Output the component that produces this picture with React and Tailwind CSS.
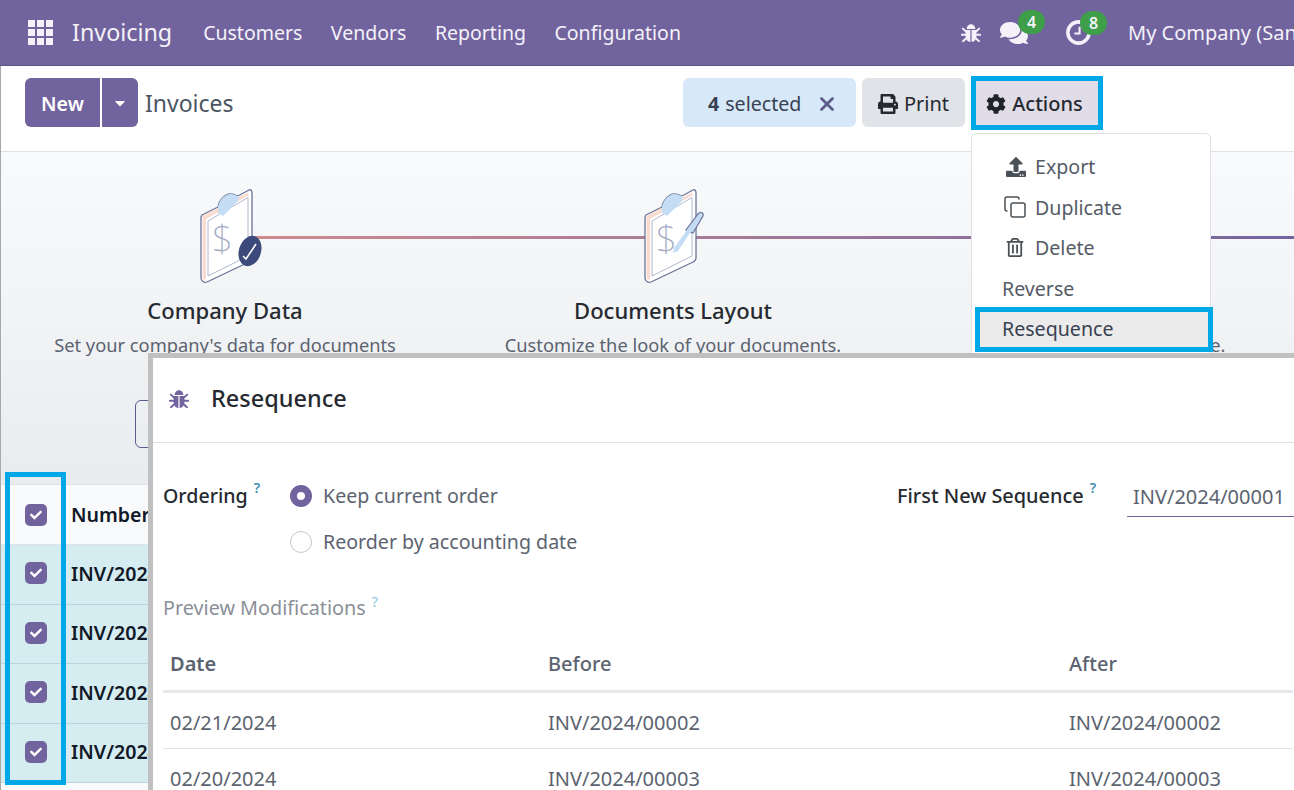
import { Copy, X } from "lucide-react";
import { FaCaretDown, FaCheck, FaCog, FaComments, FaPrint, FaRegTrashAlt, FaUpload } from "react-icons/fa";

const navLinks = ["Customers", "Vendors", "Reporting", "Configuration"];
const rowLabels = ["INV/2024/00002", "INV/2024/00003", "INV/2024/00004", "INV/2024/00005"];
const previewRows = [
  { date: "02/21/2024", before: "INV/2024/00002", after: "INV/2024/00002" },
  { date: "02/20/2024", before: "INV/2024/00003", after: "INV/2024/00003" },
];

const BugIcon = ({ className }) => (
  <svg viewBox="0 0 20 20" className={className} fill="currentColor">
    <path d="M5.6 6 C5.8 3 7.7 1.2 10 1.2 C12.3 1.2 14.2 3 14.4 6 Z" />
    <path d="M4.6 7 H9.4 V19 C6.6 18.8 4.6 16.4 4.6 13 Z" />
    <path d="M15.4 7 H10.6 V19 C13.4 18.8 15.4 16.4 15.4 13 Z" />
    <path
      d="M5 8.5 L1.8 5.6 M5 11.8 H0.8 M5.6 15 L2 18.2 M15 8.5 L18.2 5.6 M15 11.8 H19.2 M14.4 15 L18 18.2"
      fill="none"
      stroke="currentColor"
      strokeWidth="1.9"
      strokeLinecap="round"
    />
  </svg>
);

const ClockIcon = ({ className }) => (
  <svg viewBox="0 0 24 24" className={className} fill="none" stroke="currentColor">
    <circle cx="12" cy="12" r="10.2" strokeWidth="3.4" />
    <path d="M13 6.5 V13 H8" strokeWidth="2" />
  </svg>
);

const Clipboard = ({ shift = 0, children }) => (
  <svg viewBox="0 0 70 100" className="w-[70px] h-[100px] overflow-visible relative">
    <g transform={`translate(${shift} 0)`}>
      <path
        d="M12 29 L28 21 C29 14 36 7 41 8 C44 8 46 10 48 10 L59 4 C61 3 62 5 62 7 L62 72 C62 74 61 75 59 76 L17 96 C14 97 11 95 11 92 L11 31 Z"
        fill="#ffffff"
        stroke="#6b7499"
        strokeWidth="1.3"
        strokeLinejoin="round"
      />
      <path d="M12.5 30 L58 6.5 L59 9 L16 33 L16 93 L14 94 L12.5 92 Z" fill="#f8dccf" />
      <path d="M18 35 L58 11.5 L58 70 L18 90 Z" fill="#ffffff" stroke="#a9afc8" strokeWidth="0.9" />
      <path d="M28 21 C29 14 36 7 41 8 C44 8 46 10 49 10 L48 15 L33 30 L28 27 Z" fill="#c5dcf5" />
      <text x="22" y="66" fontSize="37" fontFamily="'Noto Sans', sans-serif" fontWeight="200" fill="#a3aac4">
        $
      </text>
      {children}
    </g>
  </svg>
);

const PurpleCheck = () => (
  <span className="w-[22px] h-[22px] rounded-[5px] bg-[#71639e] flex items-center justify-center">
    <FaCheck className="w-[12px] h-[12px] text-white" />
  </span>
);

const MenuItem = ({ icon, label, active }) => (
  <div
    className={
      active
        ? "h-[45px] -mt-[2px] w-[238px] ml-[3px] pl-[22px] flex items-center bg-[#ebebeb] border-[5px] border-[#00a8e8] text-[#374151]"
        : "h-[40.5px] pl-[30px] flex items-center text-[#555b66]"
    }
  >
    {icon && <span className="w-[33px] text-[#495057] flex">{icon}</span>}
    {label}
  </div>
);

const Help = () => <sup className="text-[#3f8fb0] text-[14px] font-semibold ml-[6px] -top-[8px] relative">?</sup>;

export default function App() {
  return (
    <div className="relative w-[1294px] h-[790px] overflow-hidden bg-white font-['Noto_Sans',sans-serif] text-[19.6px]">
      <nav className="h-[66px] bg-[#71639e] border-b border-[#5f5287] flex items-center text-[#f4f2f8]">
        <div className="ml-[28px] w-[25px] h-[25px] grid grid-cols-3 gap-[2px]">
          {[0, 1, 2, 3, 4, 5, 6, 7, 8].map((i) => (
            <span key={i} className="bg-[#f4f2f8]" />
          ))}
        </div>
        <span className="ml-[19px] text-[23.3px]">Invoicing</span>
        <div className="ml-[31px] flex gap-[28.5px] text-[19.5px] pt-[1px]">
          {navLinks.map((link) => (
            <span key={link}>{link}</span>
          ))}
        </div>
        <div className="ml-auto flex items-center text-[20px]">
          <BugIcon className="w-[20px] h-[20px]" />
          <span className="relative ml-[19px] w-[28px] flex">
            <FaComments className="w-[28px] h-[28px]" />
            <span className="absolute -top-[9px] left-[18px] w-[27px] h-[24px] rounded-full bg-[#3f9e49] text-[16px] font-semibold flex items-center justify-center">
              4
            </span>
          </span>
          <span className="relative ml-[38px] w-[25px] flex">
            <ClockIcon className="w-[25px] h-[25px]" />
            <span className="absolute -top-[9px] left-[14px] w-[27px] h-[24px] rounded-full bg-[#3f9e49] text-[16px] font-semibold flex items-center justify-center">
              8
            </span>
          </span>
          <span className="ml-[37px] w-[166px] whitespace-nowrap overflow-hidden">My Company (San Francisco)</span>
        </div>
      </nav>

      <div className="border-l border-[#a8a8a8]">
        <div className="h-[86px] border-b border-[#dee2e6] pl-[24px] flex items-start pt-[12px]">
          <div className="w-[658px] flex items-center">
            <span className="h-[49px] w-[75px] pt-[2px] bg-[#71639e] rounded-l-[6px] text-white font-semibold flex items-center justify-center">
              New
            </span>
            <span className="h-[49px] w-[36px] ml-[2px] bg-[#71639e] rounded-r-[6px] text-white flex items-center justify-center">
              <FaCaretDown className="w-[16px] h-[16px]" />
            </span>
            <span className="ml-[7px] pt-[2px] text-[23px] text-[#4b5563]">Invoices</span>
          </div>
          <div className="h-[49px] w-[173px] pt-[2px] bg-[#d7e9f8] rounded-[6px] flex items-center pl-[25px] text-[#374151]">
            <b className="font-bold mr-[6px]">4</b> selected
            <X className="w-[22px] h-[22px] ml-[15px] text-[#5f5a8a]" strokeWidth={3} />
          </div>
          <div className="h-[49px] w-[103px] pt-[2px] ml-[6px] bg-[#e0e3e7] rounded-[6px] flex items-center justify-center gap-[6px] text-[#262a30] text-[20px]">
            <FaPrint className="w-[20px] h-[20px]" /> Print
          </div>
          <div className="h-[54px] w-[132px] pt-[2px] pr-[5px] ml-[6px] -mt-[2px] bg-[#e0dde8] border-[5px] border-[#00a8e8] flex items-center justify-center gap-[6px] text-[#262a30] text-[20px] font-medium">
            <FaCog className="w-[20px] h-[20px] text-[#1f2328]" /> Actions
          </div>
        </div>

        <div className="relative h-[333px] bg-gradient-to-b from-[#f9fafb] to-[#e9ecef] border-b border-[#dee2e6] grid grid-cols-[448px_448px_448px]">
          <div className="absolute left-[224px] top-[84px] w-[1100px] h-[3px] bg-gradient-to-r from-[#d08c8e] to-[#71639e]" />
          <div className="flex flex-col items-center pt-[34px]">
            <Clipboard>
              <ellipse cx="60" cy="65" rx="11" ry="15.5" transform="rotate(18 60 65)" fill="#3b4a7a" />
              <path d="M53 70 L56 73 L66 58" fill="none" stroke="#ffffff" strokeWidth="1.6" />
            </Clipboard>
            <h3 className="mt-[8px] text-[22px] font-medium text-[#262a30]">Company Data</h3>
            <p className="mt-[4px] text-[18.3px] text-[#5c6370] whitespace-nowrap">Set your company's data for documents</p>
            <span className="mt-[42px] h-[48px] w-[180px] border border-[#5a5f8a] rounded-[6px]" />
          </div>
          <div className="flex flex-col items-center pt-[34px]">
            <Clipboard shift={-4}>
              <path d="M59 47 L69 30 C70 27 67 25 64 28 L52 44 Z" fill="#c5dcf5" stroke="#6b7499" strokeWidth="1.2" />
              <path d="M62 38 L44 65 L39 67 L40 62 L56 40 Z" fill="#c5dcf5" />
            </Clipboard>
            <h3 className="mt-[8px] text-[22px] font-medium text-[#262a30]">Documents Layout</h3>
            <p className="mt-[4px] text-[18.3px] text-[#5c6370] whitespace-nowrap">Customize the look of your documents.</p>
          </div>
          <div className="flex flex-col items-center pt-[34px]">
            <div className="h-[100px]" />
            <h3 className="mt-[8px] text-[22px] font-medium text-[#262a30]">Create Invoice</h3>
            <p className="mt-[4px] text-[18.3px] text-[#5c6370] whitespace-nowrap">Create your first invoice.</p>
          </div>
        </div>

        <div className="h-[60px] bg-[#f9fafb] border-b border-[#dee2e6] flex items-center font-semibold text-[#111827]">
          <span className="w-[70px] pl-[24px] flex">
            <PurpleCheck />
          </span>
          Number
        </div>
        {rowLabels.map((label) => (
          <div
            key={label}
            className="h-[59.5px] pb-[2px] bg-[#d5ecf0] border-b border-[#bdd5da] flex items-center font-semibold text-[#111827]"
          >
            <span className="w-[70px] pl-[24px] flex">
              <PurpleCheck />
            </span>
            {label}
          </div>
        ))}
        <div className="h-[20px] bg-[#f9fafb]" />
      </div>

      {/* blue marker around the checkbox column */}
      <div className="absolute left-[5px] top-[472px] w-[61px] h-[313px] border-[5px] border-[#00a8e8]" />

      <div className="absolute left-[971px] top-[133px] w-[240px] h-[230px] bg-white border border-[#dfe1e5] rounded-[6px] pt-[12.5px]">
        <MenuItem icon={<FaUpload className="w-[22px] h-[20px] ml-[3px]" />} label="Export" />
        <MenuItem icon={<Copy className="w-[24px] h-[24px] ml-[1px]" strokeWidth={1.5} />} label="Duplicate" />
        <MenuItem icon={<FaRegTrashAlt className="w-[18px] h-[19px] ml-[4px]" />} label="Delete" />
        <MenuItem label="Reverse" />
        <MenuItem label="Resequence" active />
      </div>

      <div className="absolute left-[148px] top-[353px] w-[1200px] h-[480px] bg-white border-[5px] border-[#c0c0c0]">
        <div className="h-[85px] border-b border-[#dee2e6] flex items-center pl-[16px] pb-[3px]">
          <BugIcon className="w-[20px] h-[20px] text-[#71639e]" />
          <h2 className="ml-[22px] text-[23.5px] font-medium text-[#262a30]">Resequence</h2>
        </div>
        <div className="px-[10px]">
          <div className="flex mt-[30px]">
            <div className="w-[734px] shrink-0 flex">
              <div className="w-[127px] h-[46px] flex items-center font-medium text-[#262a30]">
                Ordering
                <Help />
              </div>
              <div className="text-[#5c6370]">
                <div className="h-[46px] flex items-center">
                  <span className="w-[22px] h-[22px] rounded-full bg-white border-[7px] border-[#71639e] mr-[11px]" />
                  Keep current order
                </div>
                <div className="h-[46px] flex items-center">
                  <span className="w-[22px] h-[22px] rounded-full bg-white border border-[#c4c7cc] mr-[11px]" />
                  Reorder by accounting date
                </div>
              </div>
            </div>
            <div className="w-[230px] shrink-0 h-[46px] flex items-center font-medium text-[#262a30] text-[19.9px] whitespace-nowrap">
              First New Sequence
              <Help />
            </div>
            <div className="w-[300px] shrink-0 h-[44px] pl-[6px] pt-[9px] border-b border-[#71639e] text-[#5c6370] text-[20px]">
              INV/2024/00001
            </div>
          </div>
          <div className="mt-[28px] text-[#8a8f98] text-[19.8px] flex items-center">
            Preview Modifications
            <sup className="text-[#8cc4dc] text-[14px] ml-[6px] -top-[6px] relative">?</sup>
          </div>
          <table className="mt-[15px] w-[1130px] table-fixed border-collapse text-left text-[#5c6370] text-[20px]">
            <thead>
              <tr className="h-[54px] border-b-[3px] border-[#e7e9ed]">
                <th className="w-[378px] pl-[7px] font-semibold">Date</th>
                <th className="w-[521px] pl-[7px] font-medium">Before</th>
                <th className="pl-[7px] font-medium">After</th>
              </tr>
            </thead>
            <tbody>
              {previewRows.map((row) => (
                <tr key={row.date} className="h-[57px] border-b border-[#dee2e6]">
                  <td className="pl-[7px] pt-[4px]">{row.date}</td>
                  <td className="pl-[7px] pt-[4px]">{row.before}</td>
                  <td className="pl-[7px] pt-[4px]">{row.after}</td>
                </tr>
              ))}
            </tbody>
          </table>
        </div>
      </div>
    </div>
  );
}
